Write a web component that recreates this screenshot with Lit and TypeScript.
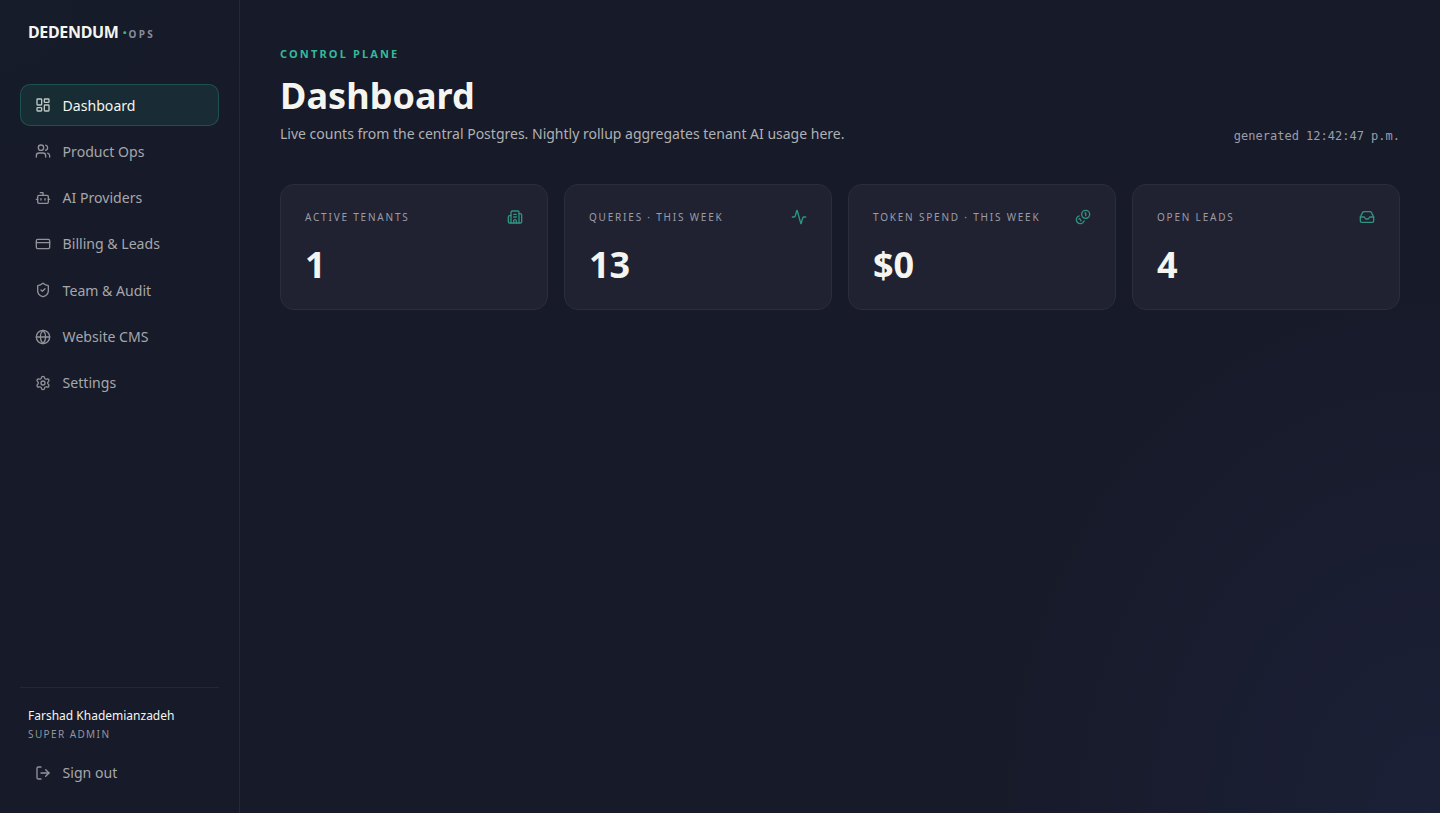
import { LitElement, html, css, svg } from "lit";
import { customElement, property } from "lit/decorators.js";

const icons: Record<string, unknown> = {
  dashboard: svg`<rect width="7" height="9" x="3" y="3" rx="1"/><rect width="7" height="5" x="14" y="3" rx="1"/><rect width="7" height="9" x="14" y="12" rx="1"/><rect width="7" height="5" x="3" y="16" rx="1"/>`,
  users: svg`<path d="M16 21v-2a4 4 0 0 0-4-4H6a4 4 0 0 0-4 4v2"/><circle cx="9" cy="7" r="4"/><path d="M22 21v-2a4 4 0 0 0-3-3.87"/><path d="M16 3.13a4 4 0 0 1 0 7.75"/>`,
  bot: svg`<path d="M12 8V4H8"/><rect width="16" height="12" x="4" y="8" rx="2"/><path d="M2 14h2"/><path d="M20 14h2"/><path d="M15 13v2"/><path d="M9 13v2"/>`,
  card: svg`<rect width="20" height="14" x="2" y="5" rx="2"/><path d="M2 10h20"/>`,
  shield: svg`<path d="M20 13c0 5-3.5 7.5-7.66 8.95a1 1 0 0 1-.67-.01C7.5 20.5 4 18 4 13V6a1 1 0 0 1 1-1c2 0 4.5-1.2 6.24-2.72a1.17 1.17 0 0 1 1.52 0C14.51 3.81 17 5 19 5a1 1 0 0 1 1 1z"/><path d="m9 12 2 2 4-4"/>`,
  globe: svg`<circle cx="12" cy="12" r="10"/><path d="M12 2a14.5 14.5 0 0 0 0 20 14.5 14.5 0 0 0 0-20"/><path d="M2 12h20"/>`,
  settings: svg`<path d="M9.671 4.136a2.34 2.34 0 0 1 4.659 0 2.34 2.34 0 0 0 3.319 1.915 2.34 2.34 0 0 1 2.33 4.033 2.34 2.34 0 0 0 0 3.831 2.34 2.34 0 0 1-2.33 4.033 2.34 2.34 0 0 0-3.319 1.915 2.34 2.34 0 0 1-4.659 0 2.34 2.34 0 0 0-3.32-1.915 2.34 2.34 0 0 1-2.33-4.033 2.34 2.34 0 0 0 0-3.831A2.34 2.34 0 0 1 6.35 6.051a2.34 2.34 0 0 0 3.319-1.915"/><circle cx="12" cy="12" r="3"/>`,
  logout: svg`<path d="M9 21H5a2 2 0 0 1-2-2V5a2 2 0 0 1 2-2h4"/><path d="m16 17 5-5-5-5"/><path d="M21 12H9"/>`,
  building: svg`<path d="M10 12h4"/><path d="M10 8h4"/><path d="M14 21v-3a2 2 0 0 0-4 0v3"/><path d="M6 10H4a2 2 0 0 0-2 2v7a2 2 0 0 0 2 2h16a2 2 0 0 0 2-2V9a2 2 0 0 0-2-2h-2"/><path d="M6 21V5a2 2 0 0 1 2-2h8a2 2 0 0 1 2 2v16"/>`,
  activity: svg`<path d="M22 12h-2.48a2 2 0 0 0-1.93 1.46l-2.35 8.36a.25.25 0 0 1-.48 0L9.24 2.18a.25.25 0 0 0-.48 0l-2.35 8.36A2 2 0 0 1 4.49 12H2"/>`,
  coins: svg`<path d="M13.744 17.736a6 6 0 1 1-7.48-7.48"/><path d="M15 6h1v4"/><path d="m6.134 14.768.866-.5 2 3.464"/><circle cx="16" cy="8" r="6"/>`,
  inbox: svg`<path d="M22 12h-6l-2 3h-4l-2-3H2"/><path d="M5.45 5.11 2 12v6a2 2 0 0 0 2 2h16a2 2 0 0 0 2-2v-6l-3.45-6.89A2 2 0 0 0 16.76 4H7.24a2 2 0 0 0-1.79 1.11z"/>`,
};

@customElement("line-icon")
class LineIcon extends LitElement {
  @property() name = "";
  static styles = css`
    :host { display: block; width: 16px; height: 16px; flex: none; }
    svg { display: block; width: 100%; height: 100%; fill: none; stroke: currentColor; stroke-width: 2; stroke-linecap: round; stroke-linejoin: round; }
  `;
  render() {
    return html`<svg viewBox="0 0 24 24" aria-hidden="true">${icons[this.name]}</svg>`;
  }
}

const nav = [
  ["dashboard", "Dashboard"],
  ["users", "Product Ops"],
  ["bot", "AI Providers"],
  ["card", "Billing & Leads"],
  ["shield", "Team & Audit"],
  ["globe", "Website CMS"],
  ["settings", "Settings"],
];

const stats = [
  ["Active tenants", "1", "building"],
  ["Queries · this week", "13", "activity"],
  ["Token spend · this week", "$0", "coins"],
  ["Open leads", "4", "inbox"],
];

@customElement("app-root")
class AppRoot extends LitElement {
  static styles = css`
    :host {
      display: grid;
      grid-template-columns: 240px 1fr;
      height: 100vh;
      overflow: hidden;
      box-sizing: border-box;
      font-family: "Noto Sans", sans-serif;
      font-size: 14px;
      line-height: 1.5;
      color: #f5f5f0;
      background:
        radial-gradient(320px 300px at 0% 0%, rgba(18, 42, 44, 0.1), transparent),
        radial-gradient(450px 530px at 100% 100%, rgba(42, 50, 96, 0.26), transparent),
        #171a29;
    }
    * { box-sizing: border-box; margin: 0; }
    .side { display: flex; flex-direction: column; padding: 20px 20px 19px; border-right: 1px solid rgba(255, 255, 255, 0.06); }
    .brand { display: flex; align-items: baseline; padding: 0 8px; height: 64px; font-size: 16px; font-weight: 700; letter-spacing: -0.34px; }
    .dot { margin: 0 1.7px 0 4px; color: #34b99a; }
    .ops { font-size: 10px; font-weight: 700; letter-spacing: 2.4px; color: #8a8c99; }
    .nav { display: flex; flex-direction: column; gap: 4px; }
    .item { display: flex; align-items: center; gap: 12px; padding: 9.6px 13.6px; border: 1px solid transparent; border-radius: 10px; font-size: 14.08px; color: #a6a7aa; }
    .item line-icon { color: #929398; }
    .item.active { color: #f5f5f0; background: rgba(45, 184, 150, 0.11); border-color: rgba(45, 184, 150, 0.27); }
    .item.active line-icon { color: #c1c7c6; }
    .foot { margin-top: auto; padding-top: 18px; border-top: 1px solid rgba(255, 255, 255, 0.06); }
    .name { padding: 0 8px; font-size: 12px; line-height: 19px; }
    .role { padding: 0 8px; margin-bottom: 8.8px; font-size: 10px; line-height: 18px; letter-spacing: 1.4px; color: #9395a0; }
    .main { padding: 44px 40px; }
    .eyebrow { font-size: 11px; line-height: 20px; font-weight: 700; letter-spacing: 2.15px; color: #34b99a; }
    h1 { margin-top: 10px; font-size: 36px; line-height: 44px; font-weight: 700; letter-spacing: 0.06px; }
    .row { display: flex; justify-content: space-between; align-items: flex-end; margin-top: 5px; }
    .sub { color: #b0b1b2; }
    .time { font-family: "DejaVu Sans Mono", monospace; font-size: 12px; line-height: 16px; color: #9b9da7; }
    .cards { display: grid; grid-template-columns: repeat(4, 1fr); gap: 16px; margin-top: 40px; }
    .card { height: 126px; padding: 24px; border: 1px solid #2b2d3d; border-radius: 14px; background: #202232; }
    .top { display: flex; justify-content: space-between; align-items: center; color: #9b9da7; font-size: 10px; line-height: 16px; letter-spacing: 1.8px; text-transform: uppercase; }
    .top line-icon { color: #2e947f; }
    .value { margin-top: 14px; font-size: 36px; line-height: 52px; font-weight: 700; }
  `;
  render() {
    return html`
      <aside class="side">
        <div class="brand">DEDENDUM<span class="dot">·</span><span class="ops">OPS</span></div>
        <nav class="nav">
          ${nav.map(([icon, label], i) => html`<div class="item ${i === 0 ? "active" : ""}"><line-icon name=${icon}></line-icon><span>${label}</span></div>`)}
        </nav>
        <div class="foot">
          <div class="name">Farshad Khademianzadeh</div>
          <div class="role">SUPER ADMIN</div>
          <div class="item"><line-icon name="logout"></line-icon><span>Sign out</span></div>
        </div>
      </aside>
      <main class="main">
        <div class="eyebrow">CONTROL PLANE</div>
        <h1>Dashboard</h1>
        <div class="row">
          <div class="sub">Live counts from the central Postgres. Nightly rollup aggregates tenant AI usage here.</div>
          <div class="time">generated 12:42:47 p.m.</div>
        </div>
        <section class="cards">
          ${stats.map(([label, value, icon]) => html`<div class="card"><div class="top"><span>${label}</span><line-icon name=${icon}></line-icon></div><div class="value">${value}</div></div>`)}
        </section>
      </main>
    `;
  }
}
